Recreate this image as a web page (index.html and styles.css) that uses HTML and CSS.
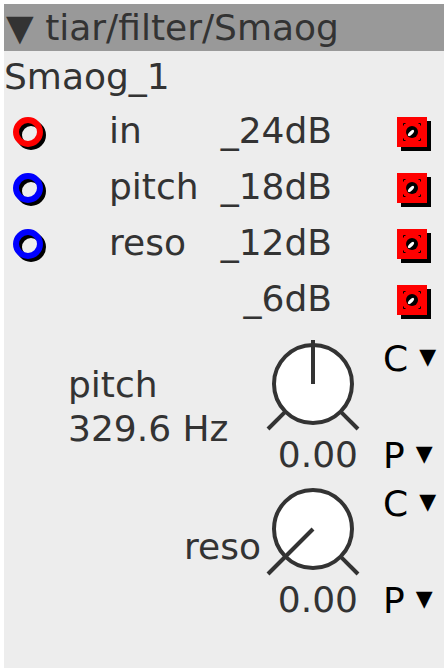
FILE: index.html
```html
<!DOCTYPE html>
<html lang="en">
<head>
    <meta charset="UTF-8">
    <meta name="viewport" content="width=device-width, initial-scale=1.0">
    <title>tiar/filter/Smaog</title>
    <link rel="stylesheet" href="styles.css">
</head>
<body>
    <div class="object">
        <div class="title">▼ tiar/filter/Smaog</div>
        <div class="instance">Smaog_1</div>
        <div class="io">
            <div class="io-row">
                <div class="inlet">
                    <svg width="40" height="40" viewBox="0 0 40 40">
                        <circle cx="18" cy="24" r="12" fill="none" stroke="#000" stroke-width="6"/>
                        <circle cx="15" cy="21" r="12" fill="none" stroke="#ff0000" stroke-width="6"/>
                    </svg>
                </div>
                <div class="io-name">in</div>
                <div class="outlet-name">_24dB</div>
                <div class="outlet">
                    <svg width="36" height="40" viewBox="0 0 36 40">
                        <rect x="4" y="10" width="30" height="30" fill="#000"/>
                        <rect x="0" y="6" width="30" height="30" fill="#ff0000"/>
                        <rect x="6.5" y="12.5" width="17" height="17" fill="none" stroke="#000" stroke-width="1" stroke-dasharray="2 13 2 0"/>
                        <circle cx="15" cy="21" r="6" fill="#000"/>
                        <ellipse cx="14" cy="22" rx="4" ry="1.6" fill="#fff" transform="rotate(-45 14 22)"/>
                    </svg>
                </div>
            </div>
            <div class="io-row">
                <div class="inlet">
                    <svg width="40" height="40" viewBox="0 0 40 40">
                        <circle cx="18" cy="24" r="12" fill="none" stroke="#000" stroke-width="6"/>
                        <circle cx="15" cy="21" r="12" fill="none" stroke="#0000ff" stroke-width="6"/>
                    </svg>
                </div>
                <div class="io-name">pitch</div>
                <div class="outlet-name">_18dB</div>
                <div class="outlet">
                    <svg width="36" height="40" viewBox="0 0 36 40">
                        <rect x="4" y="10" width="30" height="30" fill="#000"/>
                        <rect x="0" y="6" width="30" height="30" fill="#ff0000"/>
                        <rect x="6.5" y="12.5" width="17" height="17" fill="none" stroke="#000" stroke-width="1" stroke-dasharray="2 13 2 0"/>
                        <circle cx="15" cy="21" r="6" fill="#000"/>
                        <ellipse cx="14" cy="22" rx="4" ry="1.6" fill="#fff" transform="rotate(-45 14 22)"/>
                    </svg>
                </div>
            </div>
            <div class="io-row">
                <div class="inlet">
                    <svg width="40" height="40" viewBox="0 0 40 40">
                        <circle cx="18" cy="24" r="12" fill="none" stroke="#000" stroke-width="6"/>
                        <circle cx="15" cy="21" r="12" fill="none" stroke="#0000ff" stroke-width="6"/>
                    </svg>
                </div>
                <div class="io-name">reso</div>
                <div class="outlet-name">_12dB</div>
                <div class="outlet">
                    <svg width="36" height="40" viewBox="0 0 36 40">
                        <rect x="4" y="10" width="30" height="30" fill="#000"/>
                        <rect x="0" y="6" width="30" height="30" fill="#ff0000"/>
                        <rect x="6.5" y="12.5" width="17" height="17" fill="none" stroke="#000" stroke-width="1" stroke-dasharray="2 13 2 0"/>
                        <circle cx="15" cy="21" r="6" fill="#000"/>
                        <ellipse cx="14" cy="22" rx="4" ry="1.6" fill="#fff" transform="rotate(-45 14 22)"/>
                    </svg>
                </div>
            </div>
            <div class="io-row">
                <div class="inlet"></div>
                <div class="io-name"></div>
                <div class="outlet-name">_6dB</div>
                <div class="outlet">
                    <svg width="36" height="40" viewBox="0 0 36 40">
                        <rect x="4" y="10" width="30" height="30" fill="#000"/>
                        <rect x="0" y="6" width="30" height="30" fill="#ff0000"/>
                        <rect x="6.5" y="12.5" width="17" height="17" fill="none" stroke="#000" stroke-width="1" stroke-dasharray="2 13 2 0"/>
                        <circle cx="15" cy="21" r="6" fill="#000"/>
                        <ellipse cx="14" cy="22" rx="4" ry="1.6" fill="#fff" transform="rotate(-45 14 22)"/>
                    </svg>
                </div>
            </div>
        </div>

        <div class="knob-block">
            <div class="knob-label">pitch<br>329.6 Hz</div>
            <div class="knob">
                <svg width="100" height="106" viewBox="0 0 100 106">
                    <line x1="23.4" y1="84.6" x2="6" y2="102" stroke="#333" stroke-width="4"/>
                    <line x1="78.6" y1="84.6" x2="96" y2="102" stroke="#333" stroke-width="4"/>
                    <circle cx="51" cy="57" r="39" fill="#fff" stroke="#333" stroke-width="4"/>
                    <line x1="51" y1="13" x2="51" y2="57" stroke="#333" stroke-width="4"/>
                </svg>
                <div class="knob-value">0.00</div>
            </div>
            <div class="menus">
                <div class="menu">C<span class="menu-arrow">▼</span></div>
                <div class="menu menu-low">P<span class="menu-arrow">▼</span></div>
            </div>
        </div>

        <div class="knob-block">
            <div class="knob-label knob-label-right">reso</div>
            <div class="knob">
                <svg width="100" height="106" viewBox="0 0 100 106">
                    <line x1="78.6" y1="84.6" x2="96" y2="102" stroke="#333" stroke-width="4"/>
                    <circle cx="51" cy="57" r="39" fill="#fff" stroke="#333" stroke-width="4"/>
                    <line x1="51" y1="57" x2="6" y2="102" stroke="#333" stroke-width="4"/>
                </svg>
                <div class="knob-value">0.00</div>
            </div>
            <div class="menus">
                <div class="menu">C<span class="menu-arrow">▼</span></div>
                <div class="menu menu-low">P<span class="menu-arrow">▼</span></div>
            </div>
        </div>
    </div>
</body>
</html>
```

FILE: styles.css
```css
* {
    box-sizing: border-box;
    margin: 0;
    padding: 0;
}
body {
    background: #ffffff;
    font-family: "DejaVu Sans", sans-serif;
    font-size: 36px;
    color: #333333;
}
.object {
    margin: 4px;
    width: 440px;
    height: 664px;
    background: #ededed;
    overflow: hidden;
}
.title {
    height: 47px;
    line-height: 47px;
    padding-left: 2px;
    background: #999999;
    white-space: nowrap;
}
.instance {
    height: 52px;
    line-height: 52px;
}
.io-row {
    display: grid;
    grid-template-columns: 105px 1fr 120px 112px;
    height: 56px;
    line-height: 56px;
    align-items: center;
}
.inlet {
    padding-left: 9px;
    height: 40px;
}
.inlet svg, .outlet svg, .knob svg {
    display: block;
}
.outlet-name {
    text-align: right;
}
.outlet {
    padding-left: 65px;
    height: 40px;
}
.knob-block {
    display: grid;
    grid-template-columns: 258px 100px 82px;
    height: 145px;
}
.knob-label {
    padding-top: 36px;
    padding-left: 64px;
    line-height: 44px;
}
.knob-label-right {
    padding-left: 0;
    padding-top: 53px;
    padding-right: 1px;
    text-align: right;
}
.knob-value {
    line-height: 44px;
    text-align: right;
    padding-right: 4px;
}
.menus {
    padding-left: 21px;
    padding-top: 8px;
    color: #000000;
}
.menu {
    line-height: 44px;
    white-space: nowrap;
}
.menu-low {
    margin-top: 51px;
}
.menu-arrow {
    font-size: 22px;
    margin-left: 11px;
    vertical-align: 7px;
}
```
